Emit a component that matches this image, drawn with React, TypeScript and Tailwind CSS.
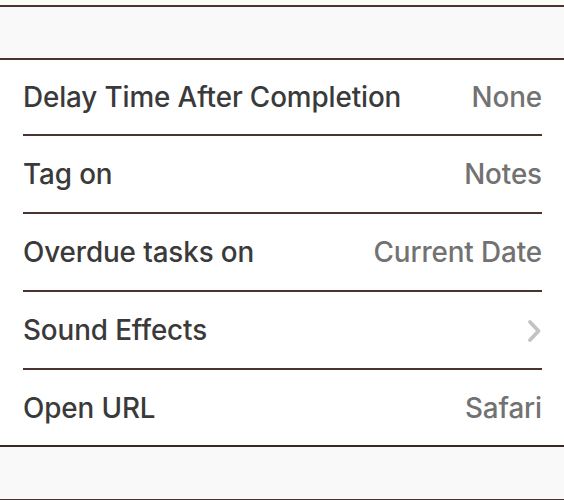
import React from "react";

const rows: { label: string; value?: string; chevron?: boolean }[] = [
  { label: "Delay Time After Completion", value: "None" },
  { label: "Tag on", value: "Notes" },
  { label: "Overdue tasks on", value: "Current Date" },
  { label: "Sound Effects", chevron: true },
  { label: "Open URL", value: "Safari" },
];

export default function App() {
  return (
    <div
      className="w-[564px] h-[500px] overflow-hidden bg-white"
      style={{ fontFamily: "Inter, 'Noto Sans', sans-serif" }}
    >
      <div className="h-[5px] bg-[#fdfcf7]" />
      <div className="h-[2px] bg-[#4a3430]" />
      <div className="h-[51px] bg-[#f9f9f9]" />
      <div className="h-[2px] bg-[#4a3430]" />
      <div className="flex flex-col">
        {rows.map((r, i) => (
          <div key={r.label} className="pl-[23px] pr-[22px]">
            <div
              className={
                "flex items-center justify-between pt-[2px] " +
                (i === 0 ? "h-[74px]" : i === rows.length - 1 ? "h-[75px]" : "h-[76px]")
              }
            >
              <span className="text-[27.8px] font-medium text-[#3a3a3a] tracking-[-0.1px]">
                {r.label}
              </span>
              {r.chevron ? (
                <svg width="18" height="26" viewBox="0 0 18 26" className="-mr-[1px]">
                  <path
                    d="M5 4 L13.5 13 L5 22"
                    fill="none"
                    stroke="#c3c3c5"
                    strokeWidth="3.8"
                    strokeLinecap="round"
                    strokeLinejoin="round"
                  />
                </svg>
              ) : (
                <span className="text-[27.8px] font-medium text-[#727272] tracking-[-0.1px]">
                  {r.value}
                </span>
              )}
            </div>
            {i < rows.length - 1 && <div className="h-[2px] bg-[#4a3430]" />}
          </div>
        ))}
      </div>
      <div className="h-[2px] bg-[#3a2824]" />
      <div className="h-[52px] bg-[#f9f9f9]" />
      <div className="h-[2px] bg-[#4a3430]" />
    </div>
  );
}
